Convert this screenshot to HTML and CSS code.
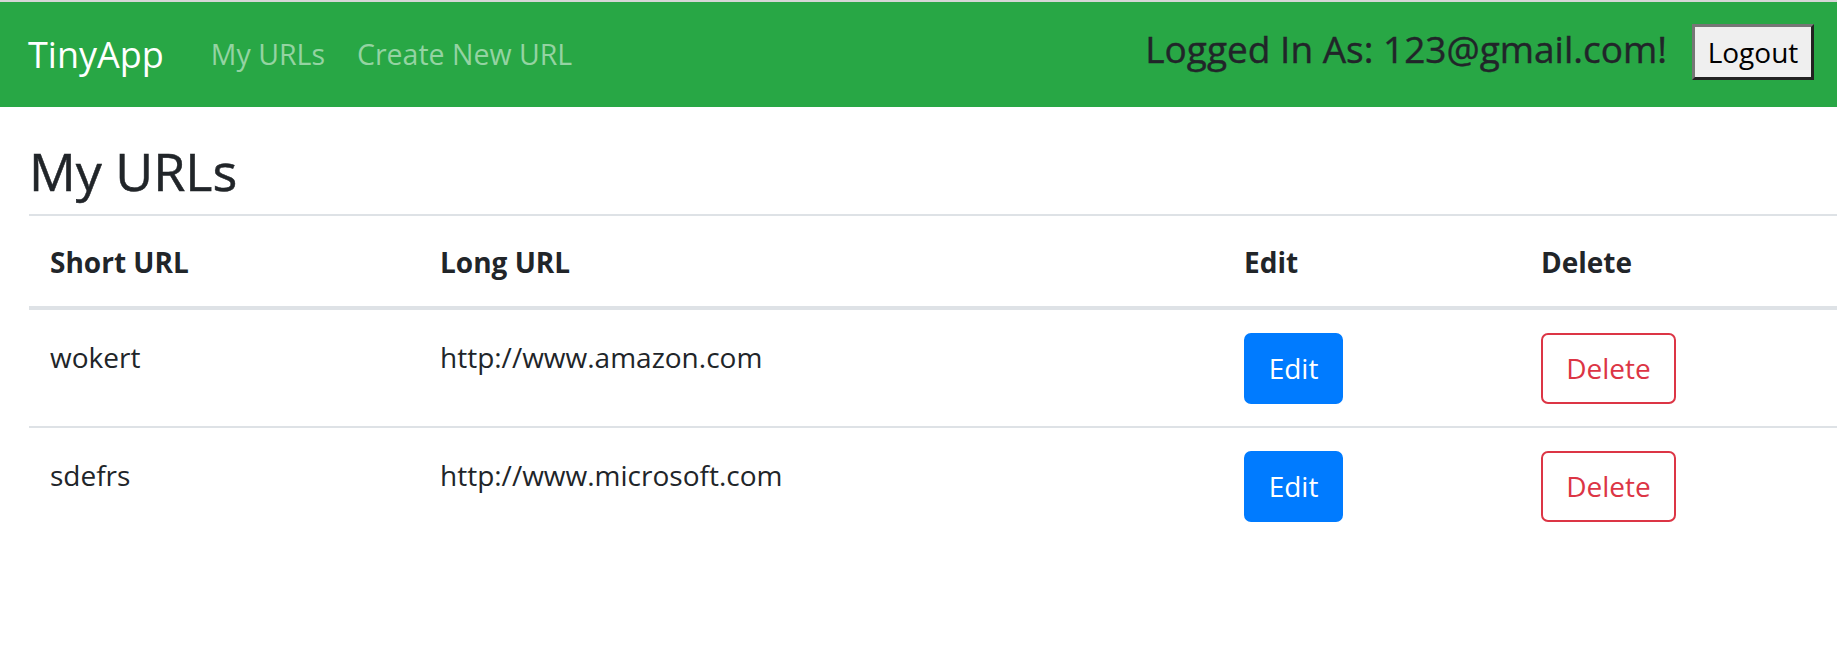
FILE: index.html
```html
<!DOCTYPE html>
<html lang="en">
<head>
<meta charset="utf-8">
<title>TinyApp</title>
<link rel="stylesheet" href="styles.css">
</head>
<body>
<nav class="navbar">
  <a class="brand" href="#">TinyApp</a>
  <div class="nav-links">
    <a class="nav-link" href="#">My URLs</a>
    <a class="nav-link" href="#">Create New URL</a>
  </div>
  <div class="user">
    <h4 class="user-text">Logged In As: 123@gmail.com!</h4>
    <button class="logout" type="button">Logout</button>
  </div>
</nav>
<main class="content">
  <h2 class="title">My URLs</h2>
  <table class="table">
    <colgroup>
      <col class="c1"><col class="c2"><col class="c3"><col class="c4">
    </colgroup>
    <thead>
      <tr><th>Short URL</th><th>Long URL</th><th>Edit</th><th>Delete</th></tr>
    </thead>
    <tbody>
      <tr>
        <td class="cell-text">wokert</td>
        <td class="cell-text">http://www.amazon.com</td>
        <td><a class="btn btn-edit" href="#">Edit</a></td>
        <td><a class="btn btn-delete" href="#">Delete</a></td>
      </tr>
      <tr>
        <td class="cell-text">sdefrs</td>
        <td class="cell-text">http://www.microsoft.com</td>
        <td><a class="btn btn-edit" href="#">Edit</a></td>
        <td><a class="btn btn-delete" href="#">Delete</a></td>
      </tr>
    </tbody>
  </table>
</main>
</body>
</html>
```
FILE: styles.css
```css
* { box-sizing: border-box; }
html, body { margin: 0; padding: 0; }
body {
  font-family: "Open Sans", "Noto Sans", sans-serif;
  font-size: 28px;
  line-height: 1.5;
  color: #212529;
  background: #fff;
  border-top: 2px solid #d6d6d6;
}
a { text-decoration: none; }

.navbar {
  height: 105px;
  background: #28a745;
  display: flex;
  align-items: center;
  padding: 0 23px 0 28px;
}
.brand {
  color: #fff;
  font-size: 36px;
  line-height: 1.5;
  margin-right: 31px;
}
.nav-links { display: flex; }
.nav-link {
  color: #94d3a2;
  font-size: 28.5px;
  padding: 0 16px;
}
.user {
  margin-left: auto;
  display: flex;
  align-items: center;
  gap: 25px;
}
.user-text {
  margin: 0 0 10px 0;
  font-size: 37px;
  font-weight: 400;
  line-height: 1.2;
  color: #212529;
  -webkit-text-stroke: 0.4px #212529;
}
.logout {
  font-family: "Open Sans", "Noto Sans", sans-serif;
  font-size: 28px;
  height: 56px;
  width: 122px;
  padding: 0;
  color: #000;
  background: #efefef;
  border-style: solid;
  border-width: 3px;
  border-color: #767676 #222 #222 #767676;
  margin-bottom: 5px;
}

.content { padding-left: 29px; }
.title {
  font-size: 52px;
  font-weight: 400;
  line-height: 1.2;
  margin: 33px 0 12px 0;
  -webkit-text-stroke: 0.5px #212529;
}
.table {
  width: 100%;
  border-collapse: collapse;
  table-layout: fixed;
}
.c1 { width: 390px; }
.c2 { width: 804px; }
.c3 { width: 297px; }
.table th, .table td {
  text-align: left;
  vertical-align: top;
  line-height: 42px;
  padding: 23px 21px 22px 21px;
  border-top: 2px solid #dee2e6;
}
.table td.cell-text { padding-top: 26px; }
.table th {
  font-weight: 700;
  padding-top: 25px;
  padding-bottom: 23px;
  border-bottom: 4px solid #dee2e6;
}
.btn {
  display: inline-block;
  height: 71px;
  line-height: 67px;
  text-align: center;
  border: 2px solid transparent;
  border-radius: 7px;
  font-size: 28px;
  vertical-align: top;
}
.btn-edit {
  width: 99px;
  background: #007bff;
  border-color: #007bff;
  color: #fff;
}
.btn-delete {
  width: 135px;
  background: #fff;
  border-color: #dc3545;
  color: #dc3545;
}
```
